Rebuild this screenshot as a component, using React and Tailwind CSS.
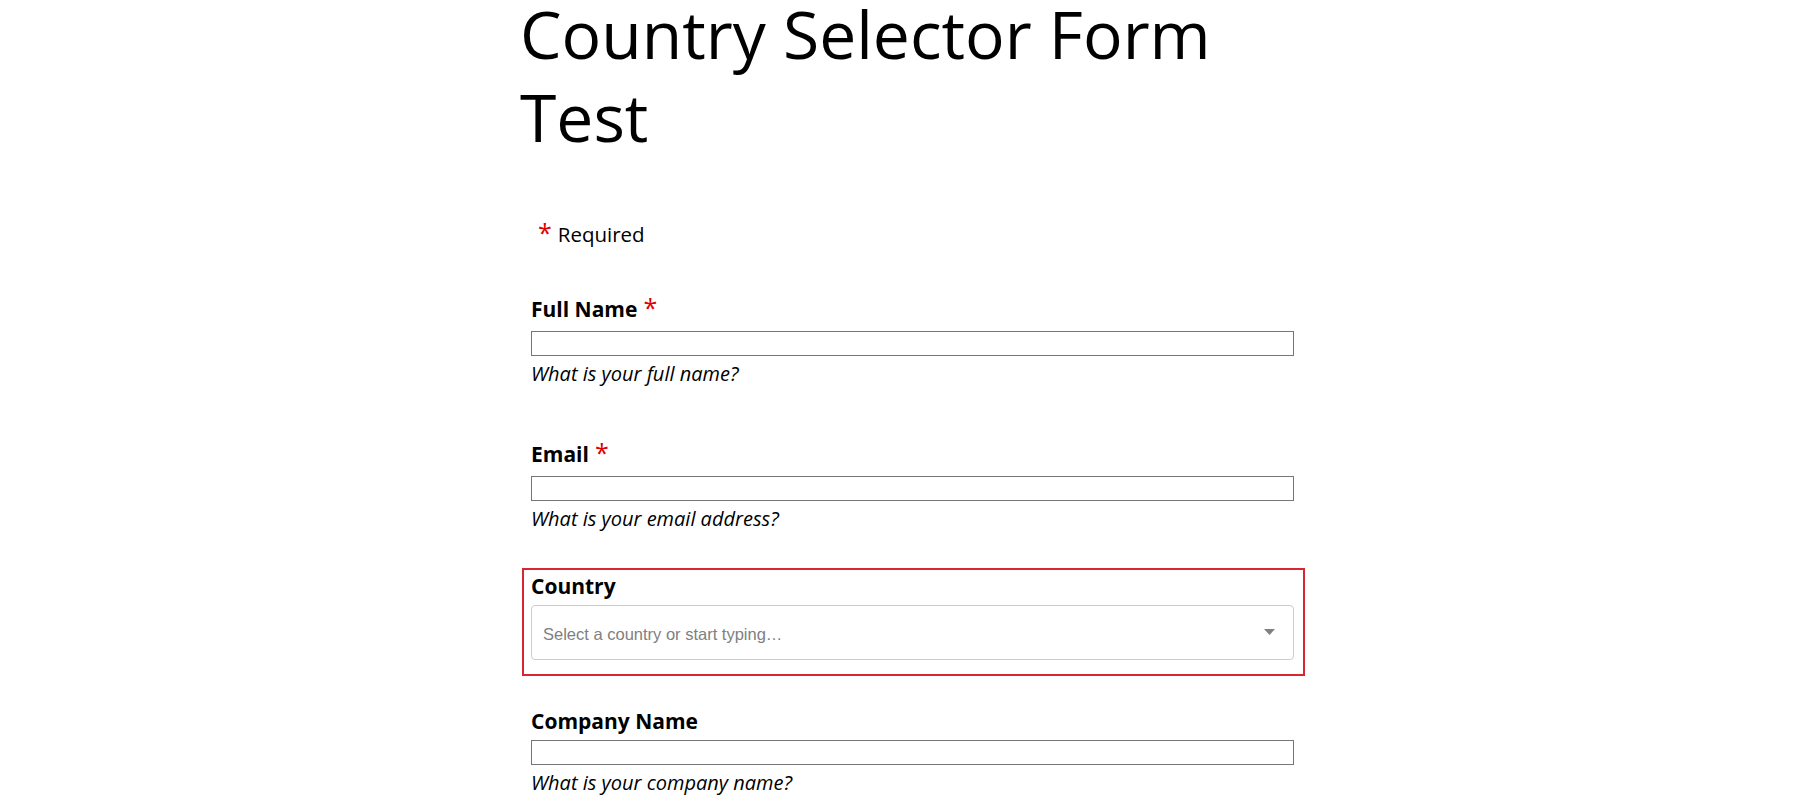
import React from "react";

const Field = ({ label, required, hint, tight }) => (
  <div className="pl-[9px] pr-[11px]">
    <label className="block text-[21px] leading-[24px] font-bold text-black">
      {label}
      {required && (
        <span className="ml-[6px] font-normal text-[25px] leading-[20px] text-[#e00000]">*</span>
      )}
    </label>
    <input
      type="text"
      className={`${tight ? "mt-[7px]" : "mt-[10px]"} block w-full h-[25px] border border-[#767676] bg-white`}
    />
    <p className="mt-[6px] text-[20px] leading-[24px] italic text-black">{hint}</p>
  </div>
);

const App = () => {
  return (
    <div className="min-h-screen bg-white font-['Open_Sans',sans-serif] text-black">
      <div className="ml-[522px] w-[783px]">
        {/* TITLE */}
        <h1 className="-mt-[8px] text-[66px] leading-[83px] font-normal -ml-[2px]">
          Country Selector Form Test
        </h1>

        {/* REQUIRED NOTE */}
        <p className="mt-[64px] pl-[16px] text-[20.5px] leading-[24px]">
          <span className="text-[25px] leading-[20px] text-[#e00000]">*</span>
          <span className="ml-[6px]">Required</span>
        </p>

        {/* FIELDS */}
        <div className="mt-[51px]">
          <Field label="Full Name" required hint="What is your full name?" />
        </div>
        <div className="mt-[56px]">
          <Field label="Email" required hint="What is your email address?" />
        </div>

        {/* COUNTRY (highlighted) */}
        <div className="mt-[37px] border-2 border-[#d7262f] pl-[7px] pr-[9px] pt-[4px] pb-[14px]">
          <label className="block text-[21px] leading-[24px] font-bold">Country</label>
          <div className="mt-[7px] flex items-center h-[55px] rounded-[4px] border border-[#cccccc] bg-white pl-[11px] pr-[18px] pt-[3px]">
            <span className="flex-1 font-['Liberation_Sans',Arial,sans-serif] text-[16.5px] text-[#808080]">
              Select a country or start typing…
            </span>
            <svg width="11" height="6" viewBox="0 0 11 6" className="-mt-[5px]">
              <path d="M0 0 L11 0 L5.5 6 Z" fill="#808080" />
            </svg>
          </div>
        </div>

        <div className="mt-[33px]">
          <Field label="Company Name" hint="What is your company name?" tight />
        </div>
      </div>
    </div>
  );
};

export default App;
